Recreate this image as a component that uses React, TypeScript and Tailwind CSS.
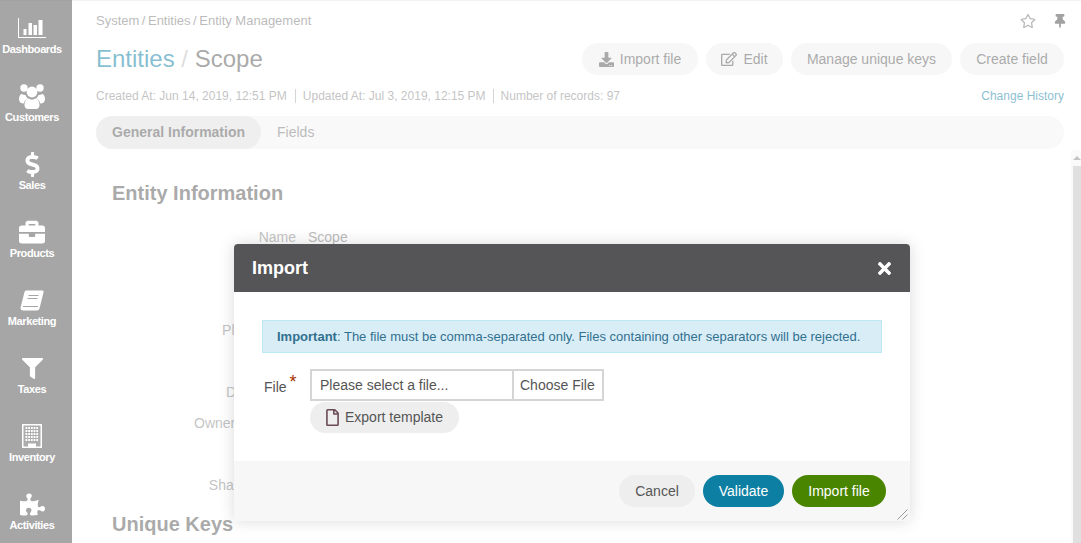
import { FaDollarSign, FaBriefcase, FaFilter, FaPuzzlePiece, FaDownload, FaRegEdit, FaRegStar, FaThumbtack, FaRegFile, FaTimes } from 'react-icons/fa';
import type { ReactNode } from 'react';

function DashIcon() {
  return (
    <svg width="28" height="20" viewBox="0 0 28 20" fill="currentColor">
      <path d="M0 0h1v19h27v1H0z" />
      <rect x="5.5" y="11" width="3" height="6" />
      <rect x="10.5" y="5" width="3.5" height="12" />
      <rect x="15.5" y="7" width="3.5" height="10" />
      <rect x="20.5" y="2" width="4" height="15" />
    </svg>
  );
}

function UsersIcon() {
  return (
    <svg width="26" height="25" viewBox="0 0 26 25" fill="currentColor">
      <circle cx="5" cy="4" r="3.7" />
      <circle cx="21" cy="4" r="3.7" />
      <circle cx="13" cy="8" r="5.4" />
      <path d="M0 15c0-3 1.5-5 3-5 1 .8 2 1.2 3.5 1 .5 1.5 1.500 2.800 2.500 3.500C6.500 15.500 5 17.500 4.800 19.500 2 19.500 0 18 0 15z" />
      <path d="M26 15c0-3-1.500-5-3-5-1 .8-2 1.200-3.500 1-.5 1.500-1.500 2.800-2.500 3.500 2.500 1 4 3 4.200 5 2.800 0 4.800-1.500 4.800-4.500z" />
      <path d="M5.500 21c0-3 1.500-6 4-6.500 2 1.500 5 1.500 7 0 2.500.5 4 3.500 4 6.500 0 2.500-1.500 4-3.500 4H9c-2 0-3.500-1.500-3.500-4z" />
    </svg>
  );
}

function BookIcon() {
  return (
    <svg width="24" height="21" viewBox="0 0 24 21">
      <path d="M6 0.500H22.500Q24 0.500 23.600 2L19.500 18.500Q19 20.500 17 20.500H3.500Q0 20.500 0.700 17L4.500 2Q4.900 0.500 6 0.500Z" fill="white" />
      <path d="M8.500 5.500H18.500M7.500 8.500H17.500M3 16.500H18" stroke="#4d4d4d" strokeWidth="1.200" fill="none" />
    </svg>
  );
}

function BuildingIcon() {
  const cells = [];
  for (let r = 0; r < 5; r++) {
    for (let c = 0; c < 5; c++) {
      cells.push(<rect key={`${r}-${c}`} x={3.5 + c * 2.7} y={3 + r * 3} width="1.800" height="2" fill="white" />);
    }
  }
  return (
    <svg width="20" height="24" viewBox="0 0 20 24">
      <rect x="0.750" y="0.750" width="18.500" height="22.500" fill="#5a5a5a" stroke="white" strokeWidth="1.500" />
      {cells}
      <rect x="6" y="19.500" width="8" height="4.500" fill="white" />
    </svg>
  );
}

const navItems: { label: string; icon: ReactNode }[] = [
  { label: 'Dashboards', icon: <DashIcon /> },
  { label: 'Customers', icon: <UsersIcon /> },
  { label: 'Sales', icon: <FaDollarSign size={25} /> },
  { label: 'Products', icon: <FaBriefcase size={26} /> },
  { label: 'Marketing', icon: <BookIcon /> },
  { label: 'Taxes', icon: <FaFilter size={21} /> },
  { label: 'Inventory', icon: <BuildingIcon /> },
  { label: 'Activities', icon: <FaPuzzlePiece size={25} /> },
];

const rows = ['Name', '', '', 'Plural Label', '', 'Description', 'Owner Assigned', '', 'Sharing Mode'];

function PageButton({ children, className }: { children: ReactNode; className: string }) {
  return (
    <button className={`flex h-8 items-center justify-center gap-[6px] rounded-full bg-[#eeeeee] text-sm text-[#555] ${className}`}>
      {children}
    </button>
  );
}

export default function App() {
  return (
    <div className="relative flex h-[543px] w-[1081px] overflow-hidden bg-white font-['Liberation_Sans',Arial,sans-serif]">
      <nav className="flex w-[72px] shrink-0 flex-col bg-[#4d4d4d] pr-2 text-white">
        {navItems.map((item) => (
          <div key={item.label} className="flex h-[68px] shrink-0 flex-col items-center pt-[15px]">
            <div className="flex h-[26px] items-center justify-center">{item.icon}</div>
            <span className="mt-[2px] text-[11px] leading-[13px] font-bold tracking-[-0.4px]">{item.label}</span>
          </div>
        ))}
      </nav>

      <main className="flex w-[992px] shrink-0 flex-col pl-6 pt-[14px] text-[#555]">
        <div className="flex h-[14px] items-center justify-between">
          <div className="flex gap-[2.5px] text-[13px] text-[#777]">
            <span>System</span><span>/</span><span>Entities</span><span>/</span><span>Entity Management</span>
          </div>
          <div className="-mr-[3px] flex items-center gap-[17px] text-[#777]">
            <FaRegStar size={16} />
            <FaThumbtack size={14} className="text-[#444]" />
          </div>
        </div>

        <div className="mt-[15px] flex h-8 items-center justify-between">
          <h1 className="text-2xl text-[#555]">
            <span className="text-[#0d7fa3]">Entities</span>
            <span className="text-[#bbb]"> / </span>
            Scope
          </h1>
          <div className="flex gap-2">
            <PageButton className="w-[116px]"><FaDownload size={15} /> Import file</PageButton>
            <PageButton className="w-[77px]"><FaRegEdit size={16} /> Edit</PageButton>
            <PageButton className="w-[161px]">Manage unique keys</PageButton>
            <PageButton className="w-[104px]">Create field</PageButton>
          </div>
        </div>

        <div className="mt-[14px] flex h-[14px] items-center justify-between text-xs text-[#888]">
          <div className="flex items-center">
            <span>Created At: Jun 14, 2019, 12:51 PM</span>
            <span className="ml-2 mr-[7px] h-[14px] w-px bg-[#aaa]" />
            <span>Updated At: Jul 3, 2019, 12:15 PM</span>
            <span className="mx-[7px] h-[14px] w-px bg-[#aaa]" />
            <span>Number of records: 97</span>
          </div>
          <a className="text-[#0d7fa3]">Change History</a>
        </div>

        <div className="mt-[13px] flex h-[33px] shrink-0 items-center rounded-full bg-[#f2f2f2] text-sm">
          <div className="flex h-full items-center rounded-full bg-[#dedede] px-4 pb-px font-bold text-[#555]">General Information</div>
          <div className="px-4 pb-px text-[#777]">Fields</div>
        </div>

        <div className="pl-4">
          <h2 className="mt-[32px] text-xl leading-6 font-bold text-[#555]">Entity Information</h2>
          <div className="mt-4 flex flex-col text-sm">
            {rows.map((label, i) => (
              <div key={i} className="flex h-[31px] shrink-0 items-center">
                <div className="w-[184px] text-right text-[#888]">{label}</div>
                {i === 0 && <div className="ml-3 text-[#777]">Scope</div>}
              </div>
            ))}
          </div>
          <h2 className="mt-3 text-xl leading-6 font-bold text-[#555]">Unique Keys</h2>
        </div>
      </main>

      <div className="ml-[7px] mt-[150px] flex w-[10px] shrink-0 flex-col bg-[#f5f5f5]">
        <div className="flex h-4 items-center justify-center pl-[2px]">
          <div className="h-0 w-0 border-x-[4px] border-b-[4px] border-x-transparent border-b-[#888]" />
        </div>
        <div className="ml-[2px] flex-1 bg-[#c0c0c0]" />
      </div>

      <div className="absolute inset-x-0 top-0 h-px bg-black/10" />
      <div className="absolute inset-0 bg-white/50" />

      <div className="absolute left-[234px] top-[244px] flex h-[277px] w-[676px] flex-col rounded-t-[4px] bg-white shadow-[0_0_16px_rgba(0,0,0,0.15)]">
        <div className="flex h-12 shrink-0 items-center justify-between rounded-t-[4px] bg-[#555557] pl-[18px] pr-4 text-white">
          <span className="text-lg font-bold">Import</span>
          <FaTimes size={19} />
        </div>
        <div className="flex flex-1 flex-col px-7 pt-7">
          <div className="flex h-[33px] items-center border border-[#bce8f1] bg-[#d9edf7] px-[14px] text-[13px] text-[#31708f]">
            <span><b>Important</b>: The file must be comma-separated only. Files containing other separators will be rejected.</span>
          </div>
          <div className="mt-4 flex">
            <label className="mt-[8px] flex w-[48px] pl-[2px] text-sm text-[#555]">
              File<span className="-mt-[5px] ml-[3px] text-lg leading-5 text-[#a93000]">*</span>
            </label>
            <div className="flex flex-col items-start">
              <div className="flex h-8 w-[294px] border-2 border-[#d5d5d5] text-sm text-[#555]">
                <div className="flex w-[202px] items-center border-r-2 border-[#d5d5d5] pl-2">Please select a file...</div>
                <div className="flex flex-1 items-center pl-[6px]">Choose File</div>
              </div>
              <button className="mt-px flex h-[31px] w-[149px] items-center gap-1 rounded-full bg-[#eeeeee] pb-px pl-[14px] text-sm text-[#555]">
                <FaRegFile size={17} className="text-[#6a4a55]" /> Export template
              </button>
            </div>
          </div>
        </div>
        <div className="flex h-[60px] shrink-0 items-center justify-end gap-2 bg-[#f7f7f7] pr-6 text-sm">
          <button className="h-8 w-[76px] rounded-full bg-[#eeeeee] text-[#555]">Cancel</button>
          <button className="h-8 w-[81px] rounded-full bg-[#0d7fa3] text-white">Validate</button>
          <button className="h-8 w-[94px] rounded-full bg-[#4a8500] text-white">Import file</button>
        </div>
        <svg className="absolute bottom-[1px] right-[2px]" width="11" height="11" viewBox="0 0 11 11" stroke="#999" fill="none">
          <path d="M0.5 10.5 10.5 0.5M5.5 10.5 10.5 5.5" />
        </svg>
      </div>
    </div>
  );
}
